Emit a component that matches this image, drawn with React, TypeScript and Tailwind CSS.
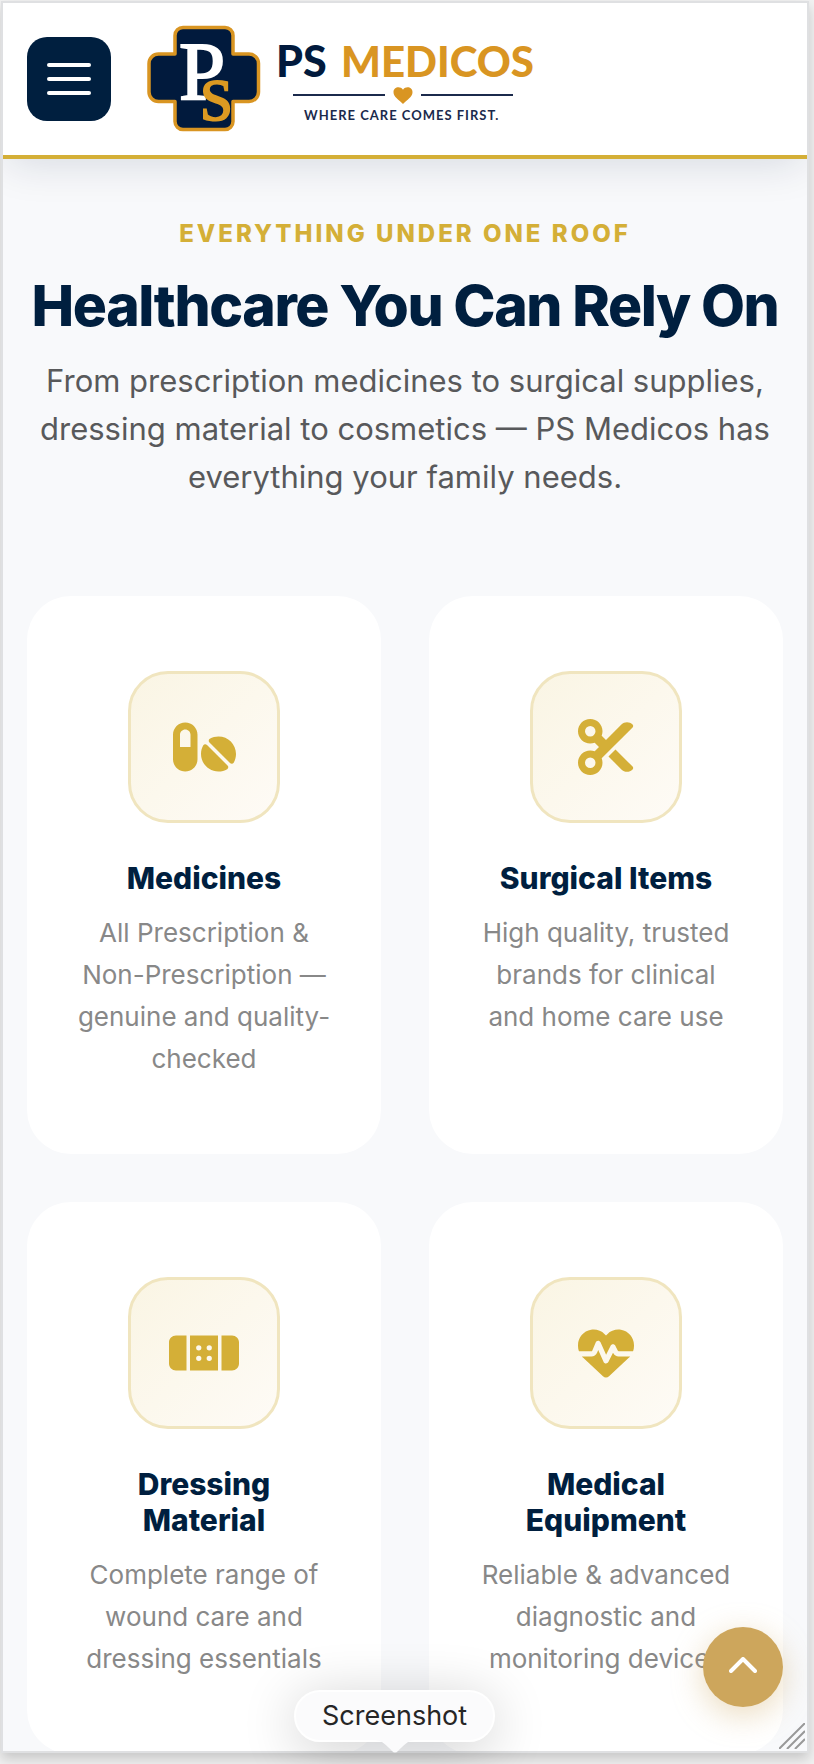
import React from "react";
import { FaPills, FaScissors, FaBandage, FaHeartPulse } from "react-icons/fa6";

const services = [
  {
    title: "Medicines",
    text: "All Prescription & Non-Prescription — genuine and quality-checked",
    icon: FaPills,
    iconWidth: "w-[63px]",
  },
  {
    title: "Surgical Items",
    text: "High quality, trusted brands for clinical and home care use",
    icon: FaScissors,
    iconWidth: "w-14",
  },
  {
    title: "Dressing Material",
    text: "Complete range of wound care and dressing essentials",
    icon: FaBandage,
    iconWidth: "w-[70px]",
  },
  {
    title: "Medical Equipment",
    text: "Reliable & advanced diagnostic and monitoring devices",
    icon: FaHeartPulse,
    iconWidth: "w-14",
  },
];

function Logo() {
  return (
    <svg width="404" height="112" viewBox="0 0 404 112" role="img" aria-label="PS Medicos">
      <path
        d="M46 4.500H88a8 8 0 0 1 8 8V31H112a9.500 9.500 0 0 1 9.500 9.500V69a9.500 9.500 0 0 1-9.500 9.500H96V98.500a8 8 0 0 1-8 8H46a8 8 0 0 1-8-8V78.500H21.500a9.500 9.500 0 0 1-9.500-9.500V40.500a9.500 9.500 0 0 1 9.500-9.500H38V12.500a8 8 0 0 1 8-8z"
        fill="#011a3d"
        stroke="#d99522"
        strokeWidth="3.500"
        strokeLinejoin="round"
      />
      <text x="42" y="76" fontSize="83" fill="#ffffff" stroke="#ffffff" strokeWidth="2" className="font-['Liberation_Serif',serif]">P</text>
      <text x="63" y="97" fontSize="59" fill="#dc9a22" stroke="#dc9a22" strokeWidth="2" className="font-['Liberation_Serif',serif]">S</text>
      <text x="139" y="54" fontSize="43" fontWeight="900" fill="#011a3d" className="font-['Lato',sans-serif]">PS</text>
      <text x="204" y="54" fontSize="42" fontWeight="900" fill="#d99522" className="font-['Lato',sans-serif]">MEDICOS</text>
      <path d="M156 72H248M284 72H376" stroke="#1b2a4c" strokeWidth="2" />
      <path
        d="M266 81C262 77 256.500 74 256.500 69.300C256.500 64 263 62.700 266 66.700C269 62.700 275.500 64 275.500 69.300C275.500 74 270 77 266 81z"
        fill="#d99522"
      />
      <text x="167" y="97" fontSize="13" fontWeight="700" fill="#1b2a4c" className="font-['Lato',sans-serif] tracking-[1px]">
        WHERE CARE COMES FIRST.
      </text>
    </svg>
  );
}

function ServiceCard({ title, text, icon: Icon, iconWidth }: (typeof services)[number]) {
  return (
    <article className="flex flex-col items-center rounded-[44px] bg-white px-[50px] pt-[75px] pb-[74px] text-center">
      <div className="flex size-[152px] items-center justify-center rounded-[40px] border-3 border-[#f0e5bf] bg-linear-to-br from-[#faf5e4] to-[#fefbf6] text-[#d4af37]">
        <Icon className={`h-14 ${iconWidth}`} />
      </div>
      <h3 className="mt-[37px] text-[30px] leading-9 font-extrabold text-[#001f3f]">{title}</h3>
      <p className="mt-4 text-[26px] leading-[42px] text-[#888888]">{text}</p>
    </article>
  );
}

export default function App() {
  return (
    <div className="relative h-screen bg-[#f2f2f2] pt-px pr-[5px] pb-[11px] pl-px font-['Inter',sans-serif]">
      <div className="relative h-full overflow-hidden border-2 border-[#dfe0e2] bg-[#f8f9fb] shadow-[0_6px_12px_rgba(0,0,0,0.18)]">
        <header className="relative flex h-[156px] items-center gap-[26px] border-b-4 border-[#d4af37] bg-white px-6 shadow-[0_8px_40px_-4px_rgba(0,31,63,0.14)]">
          <button
            type="button"
            aria-label="Open menu"
            className="flex size-[84px] flex-col items-center justify-center gap-[10px] rounded-[20px] bg-[#001f3f]"
          >
            <span className="h-1 w-11 rounded-full bg-white" />
            <span className="h-1 w-11 rounded-full bg-white" />
            <span className="h-1 w-11 rounded-full bg-white" />
          </button>
          <a href="#home">
            <Logo />
          </a>
        </header>

        <main className="px-6 pt-[59px]">
          <div className="text-center">
            <p className="text-2xl leading-8 font-extrabold tracking-[3px] text-[#d4af37]">EVERYTHING UNDER ONE ROOF</p>
            <h2 className="mt-5 text-[57px] leading-[72px] font-extrabold tracking-tight whitespace-nowrap text-[#001f3f]">
              Healthcare You Can Rely On
            </h2>
            <p className="mt-[15px] px-3 text-[31px] leading-12 text-[#58595b]">
              From prescription medicines to surgical supplies, dressing material to cosmetics — PS Medicos has
              everything your family needs.
            </p>
          </div>

          <section className="mt-[95px] grid grid-cols-2 gap-12">
            {services.map((service) => (
              <ServiceCard key={service.title} {...service} />
            ))}
          </section>
        </main>

        <button
          type="button"
          aria-label="Back to top"
          className="absolute right-6 bottom-11 flex size-20 items-center justify-center rounded-full bg-[#cda65c] pb-1 shadow-[0_8px_32px_rgba(205,166,92,0.4)]"
        >
          <svg width="28" height="16" viewBox="0 0 28 16" fill="none" stroke="#ffffff" strokeWidth="4" strokeLinecap="round" strokeLinejoin="round">
            <path d="M2 14L14 2L26 14" />
          </svg>
        </button>

        <svg className="absolute right-[2px] bottom-[2px]" width="26" height="26" viewBox="0 0 26 26" stroke="#999999" strokeWidth="2">
          <path d="M0 26L26 0M8 26L26 8M16 26L26 16" />
        </svg>
      </div>

      <div
        role="tooltip"
        className="absolute bottom-[22px] left-[294px] rounded-full border-2 border-white bg-[#fbfbfc] px-[26px] py-1 text-[27px] leading-10 text-[#262626] shadow-[0_8px_56px_rgba(0,0,0,0.2)]"
      >
        Screenshot
        <svg className="absolute top-full left-1/2 -translate-x-1/2" width="40" height="14" viewBox="0 0 40 14">
          <path d="M0 0C8 1 11 5 17 11Q20 14 23 11C29 5 32 1 40 0z" fill="#fbfbfc" />
        </svg>
      </div>
    </div>
  );
}
